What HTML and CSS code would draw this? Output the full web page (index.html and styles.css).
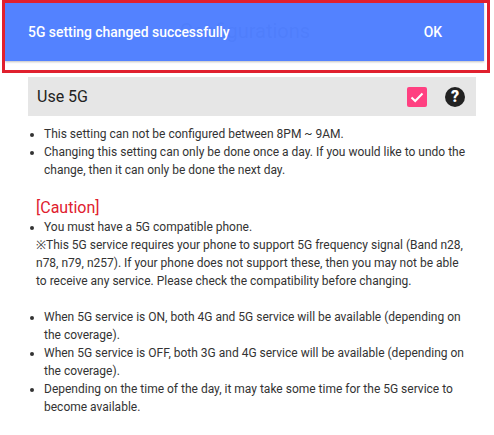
FILE: index.html
```html
<!DOCTYPE html>
<html lang="en">
<head>
    <meta charset="UTF-8">
    <title>Configurations</title>
    <link rel="stylesheet" href="styles.css">
</head>
<body>
    <h1 class="page-title">Configurations</h1>

    <!-- Snackbar over the title -->
    <div class="snackbar">
        <span class="snackbar-text">5G setting changed successfully</span>
        <span class="snackbar-ok">OK</span>
    </div>
    <div class="highlight"></div>

    <div class="content">
        <div class="setting-row">
            <span class="setting-name">Use 5G</span>
            <span class="checkbox">
                <svg width="20" height="20" viewBox="0 0 20 20"><path d="M4.5 10.5l3.7 3.5 7.3-7.5" fill="none" stroke="#fff" stroke-width="2"/></svg>
            </span>
            <span class="help">?</span>
        </div>

        <ul class="notes notes-first">
            <li>This setting can not be configured between 8PM ~ 9AM.</li>
            <li>Changing this setting can only be done once a day. If you would like to undo the change, then it can only be done the next day.</li>
        </ul>

        <div class="caution">[Caution]</div>
        <ul class="notes">
            <li>You must have a 5G compatible phone.</li>
        </ul>
        <p class="notes-text">※This 5G service requires your phone to support 5G frequency signal (Band n28, n78, n79, n257). If your phone does not support these, then you may not be able to receive any service. Please check the compatibility before changing.</p>

        <ul class="notes notes-last">
            <li>When 5G service is ON, both 4G and 5G service will be available (depending on the coverage).</li>
            <li>When 5G service is OFF, both 3G and 4G service will be available (depending on the coverage).</li>
            <li>Depending on the time of the day, it may take some time for the 5G service to become available.</li>
        </ul>
    </div>
</body>
</html>
```

FILE: styles.css
```css
body {
    margin: 0;
    background: #fff;
    font-family: Roboto, sans-serif;
    color: #333;
    overflow: hidden;
}

.page-title {
    margin: 0;
    height: 77px;
    padding-right: 4px;
    line-height: 62px;
    text-align: center;
    font-size: 20px;
    font-weight: 400;
    color: #333;
}

.snackbar {
    position: absolute;
    left: 5px;
    top: 3px;
    width: 479px;
    height: 58px;
    display: flex;
    align-items: center;
    justify-content: space-between;
    padding: 0 42px 0 23px;
    box-sizing: border-box;
    background: rgba(80, 127, 255, 0.98);
    box-shadow: 0 1px 2px rgba(0, 0, 0, 0.25);
    color: #fff;
    font-size: 13.9px;
    font-weight: 500;
}

.highlight {
    position: absolute;
    left: 2px;
    top: 0;
    width: 488px;
    height: 73px;
    box-sizing: border-box;
    border: 3px solid #e0202e;
}

.content {
    padding: 0 18px 0 28px;
}

.setting-row {
    display: flex;
    align-items: center;
    height: 39px;
    padding: 0 11px 0 9px;
    background: #e6e6e6;
    color: #222;
}

.setting-name {
    flex-grow: 1;
    font-size: 16px;
}

.checkbox {
    width: 20px;
    height: 20px;
    border-radius: 2px;
    background: #ff4081;
    margin-right: 18px;
}

.help {
    width: 20px;
    height: 20px;
    border-radius: 50%;
    background: #222;
    color: #fff;
    font-size: 16px;
    font-weight: 900;
    line-height: 20px;
    text-align: center;
}

.notes {
    margin: 0 8px 0 0;
    padding: 0 0 0 16px;
    font-size: 12px;
    line-height: 18px;
}

.notes-first {
    margin-top: 9px;
}

.notes-text {
    margin: 0 8px 0 8px;
    font-size: 12px;
    line-height: 18px;
}

.caution {
    margin-top: 19px;
    color: #e0202e;
    font-size: 16px;
    line-height: 20px;
    padding-left: 8px;
}

.notes-last {
    margin-top: 18px;
}
```
